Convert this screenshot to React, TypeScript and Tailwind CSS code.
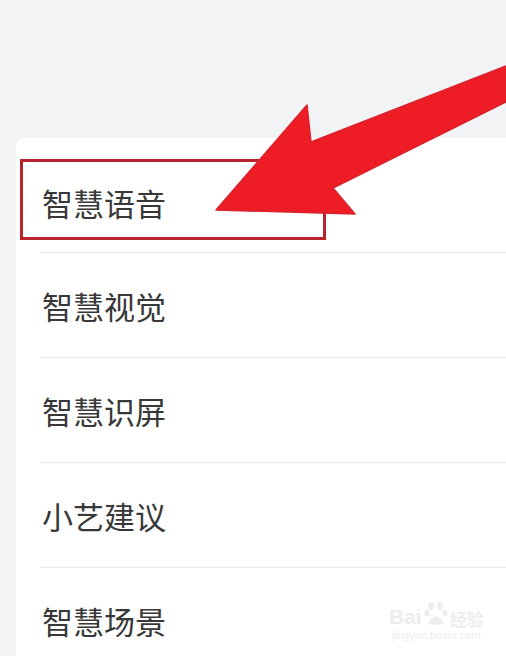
import React from "react";

const items = ["智慧语音", "智慧视觉", "智慧识屏", "小艺建议", "智慧场景"];

function Arrow() {
  return (
    <svg className="absolute inset-0 pointer-events-none" width="506" height="656" viewBox="0 0 506 656">
      <polygon
        points="216,210 307,105 311,142 506,66 506,102 333,188 355,214"
        fill="#ee1c24"
        stroke="#d9232e"
        strokeWidth="1.5"
        strokeLinejoin="round"
      />
    </svg>
  );
}

function Watermark() {
  return (
    <div className="absolute left-[389px] top-[600px] flex flex-col items-center text-[#ededed] pointer-events-none">
      <div className="flex items-end gap-[1px] leading-none">
        <span className="text-[21px] font-bold" style={{ fontFamily: "'Liberation Sans', sans-serif" }}>
          Bai
        </span>
        <svg width="26" height="27" viewBox="0 0 26 27" fill="#ededed">
          <ellipse cx="8" cy="6" rx="3" ry="4" />
          <ellipse cx="17" cy="6" rx="3" ry="4" />
          <ellipse cx="4" cy="13" rx="2.5" ry="3.5" />
          <ellipse cx="22" cy="13" rx="2.5" ry="3.5" />
          <path d="M5 23 Q13 10 21 23 Q13 27 5 23 Z" />
        </svg>
        <span className="text-[17px] font-bold">经验</span>
      </div>
      <span className="text-[11px] leading-none mt-[3px]" style={{ fontFamily: "'Liberation Sans', sans-serif" }}>
        jingyan.baidu.com
      </span>
    </div>
  );
}

export default function App() {
  return (
    <div
      className="relative w-[506px] h-[656px] overflow-hidden bg-[#f1f3f5]"
      style={{ fontFamily: "'Noto Sans CJK SC', 'Noto Sans', sans-serif" }}
    >
      <div className="h-[138px]" />
      <div className="ml-[16px] bg-white rounded-tl-[8px] pt-[14px] pl-[24px] h-[540px]">
        {items.map((t, i) => (
          <div
            key={t}
            className={`flex items-center pl-[2px] ${i < items.length - 1 ? "border-b border-[#ebebeb]" : ""} ${i === 0 ? "h-[101px]" : "h-[105px]"}`}
          >
            <span className="text-[31px] text-[#383838] leading-none">{t}</span>
          </div>
        ))}
      </div>
      <div className="absolute left-[20px] top-[159px] w-[306px] h-[81px] border-[3px] border-[#b8232c]" />
      <Arrow />
      <Watermark />
    </div>
  );
}
